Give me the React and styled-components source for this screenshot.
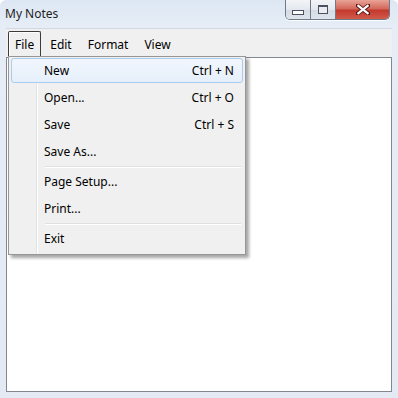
import styled, { createGlobalStyle } from 'styled-components';

const GlobalStyle = createGlobalStyle`
    html, body {
        margin: 0;
        padding: 0;
        background: #ffffff;
    }
    body {
        font-family: 'Noto Sans', 'DejaVu Sans', sans-serif;
        font-size: 12px;
        color: #000;
    }
`;

const menuItems = [
    { label: 'New', shortcut: 'Ctrl + N', active: true },
    { label: 'Open...', shortcut: 'Ctrl + O' },
    { label: 'Save', shortcut: 'Ctrl + S' },
    { label: 'Save As...' },
    { separator: true },
    { label: 'Page Setup...' },
    { label: 'Print...' },
    { separator: true },
    { label: 'Exit' },
];

const App = () => {
    return (
        <>
            <GlobalStyle />
            <Window>
                <TitleBar>
                    <Title>My Notes</Title>
                    <Controls>
                        <CtrlButton>
                            <MinGlyph />
                        </CtrlButton>
                        <CtrlButton>
                            <MaxGlyph />
                        </CtrlButton>
                        <CloseButton>
                            <svg width="14" height="11" viewBox="0 0 14 11">
                                <path
                                    d="M1 1 L13 10 M13 1 L1 10"
                                    stroke="#5a1a16"
                                    strokeWidth="4"
                                    strokeLinecap="square"
                                />
                                <path
                                    d="M1.5 1.2 L12.5 9.8 M12.5 1.2 L1.5 9.8"
                                    stroke="#ffffff"
                                    strokeWidth="2.2"
                                />
                            </svg>
                        </CloseButton>
                    </Controls>
                </TitleBar>
                <Client>
                    <MenuBar>
                        <MenuTitle $open>File</MenuTitle>
                        <MenuTitle>Edit</MenuTitle>
                        <MenuTitle>Format</MenuTitle>
                        <MenuTitle>View</MenuTitle>
                    </MenuBar>
                    <Editor />
                </Client>
                <Dropdown>
                    {menuItems.map((item, index) =>
                        item.separator ? (
                            <Separator key={index} />
                        ) : (
                            <Item key={index} $active={item.active}>
                                <Label>{item.label}</Label>
                                {item.shortcut && <Shortcut>{item.shortcut}</Shortcut>}
                            </Item>
                        )
                    )}
                </Dropdown>
            </Window>
        </>
    );
};
export default App;

const Window = styled.div`
    position: relative;
    width: 398px;
    height: 398px;
    box-sizing: border-box;
    background: linear-gradient(to bottom, #dde7f3 0px, #e6edf6 28px, #e3eaf3 100%);
    border-radius: 6px 6px 0 0;
    display: flex;
    flex-direction: column;
    padding: 0 6px 6px 6px;
`;

const TitleBar = styled.div`
    height: 28px;
    margin: 0 -6px;
    display: flex;
    align-items: flex-start;
    justify-content: space-between;
`;

const Title = styled.span`
    padding: 5px 0 0 5px;
    font-size: 12px;
    color: #1e1e1e;
`;

const Controls = styled.div`
    display: flex;
    margin-right: 8px;
    height: 19px;
    border: 1px solid #6f7b8a;
    border-top: none;
    border-radius: 0 0 5px 5px;
    overflow: hidden;
    box-shadow: 0 1px 0 rgba(255, 255, 255, 0.8);
`;

const CtrlButton = styled.div`
    width: 25px;
    height: 19px;
    box-sizing: border-box;
    border-right: 1px solid #6f7b8a;
    background: linear-gradient(to bottom, #f2f4f7 0%, #e4e8ee 50%, #d5dbe4 51%, #dfe4eb 100%);
    display: flex;
    align-items: center;
    justify-content: center;
`;

const MinGlyph = styled.div`
    width: 10px;
    height: 3px;
    margin-top: 6px;
    border: 1px solid #4a5261;
    background: #fdfdfd;
`;

const MaxGlyph = styled.div`
    width: 8px;
    height: 6px;
    border: 1px solid #4a5261;
    border-top-width: 2px;
    background: #e9ecf1;
`;

const CloseButton = styled.div`
    width: 53px;
    height: 19px;
    background: linear-gradient(to bottom, #e8a497 0%, #d3695c 45%, #c4392e 55%, #d15a4b 100%);
    display: flex;
    align-items: center;
    justify-content: center;
`;

const Client = styled.div`
    flex: 1;
    display: flex;
    flex-direction: column;
    background: #f0f0f0;
    border-top: 1px solid #cfd8e3;
`;

const MenuBar = styled.div`
    height: 28px;
    display: flex;
    align-items: flex-end;
    padding-left: 2px;
    background: #f0f0f0;
`;

const MenuTitle = styled.div`
    height: 26px;
    box-sizing: border-box;
    padding: 4px 6px 0 6px;
    margin-right: 2px;
    border: 1px solid ${props => (props.$open ? '#3c3c3c' : 'transparent')};
    border-bottom: none;
    border-radius: 2px 2px 0 0;
    background: ${props => (props.$open ? '#f0f0f0' : 'transparent')};
    box-shadow: ${props => (props.$open ? 'inset 1px 1px 0 #ffffff' : 'none')};
`;

const Editor = styled.div`
    flex: 1;
    background: #ffffff;
    border: 1px solid #828790;
`;

// the open File menu floats over the editor
const Dropdown = styled.div`
    position: absolute;
    top: 56px;
    left: 8px;
    width: 238px;
    box-sizing: border-box;
    display: flex;
    flex-direction: column;
    gap: 2px;
    padding: 1px 2px 3px 2px;
    background: #f0f0f0;
    border: 1px solid #979797;
    box-shadow: 3px 3px 3px rgba(0, 0, 0, 0.35);
    background-image: linear-gradient(to right, transparent 27px, #e2e3e3 27px, #e2e3e3 28px, #ffffff 28px, #ffffff 29px, transparent 29px);
`;

const Item = styled.div`
    height: 25px;
    box-sizing: border-box;
    display: flex;
    align-items: center;
    justify-content: space-between;
    padding: 0 8px 0 32px;
    border: 1px solid ${props => (props.$active ? '#a8cbf0' : 'transparent')};
    border-radius: 3px;
    background: ${props =>
        props.$active
            ? 'linear-gradient(to bottom, #f1f6fd 0%, #e6effa 100%)'
            : 'transparent'};
`;

const Label = styled.span`
    font-size: 12px;
`;

const Shortcut = styled.span`
    font-size: 12px;
`;

const Separator = styled.div`
    height: 1px;
    margin: 0 2px 0 34px;
    background: #e0e0e0;
    box-shadow: 0 1px 0 #ffffff;
`;
